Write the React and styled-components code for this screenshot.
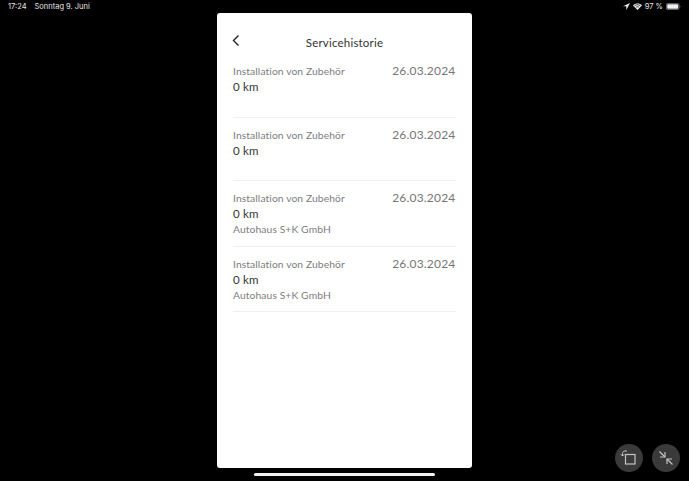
import React from "react";
import styled, { createGlobalStyle } from "styled-components";

const Global = createGlobalStyle`
  html, body { margin:0; padding:0; background:#000; }
  body { font-family:"Lato","Liberation Sans",sans-serif; }
`;

const Screen = styled.div`
  width:689px;
  height:481px;
  background:#000;
  position:relative;
  overflow:hidden;
  display:flex;
  flex-direction:column;
  align-items:center;
`;

const StatusBar = styled.div`
  width:100%;
  height:13px;
  box-sizing:border-box;
  padding:0 8px;
  display:flex;
  justify-content:space-between;
  align-items:center;
  color:#e6e6e6;
  font-size:7.5px;
  font-family:"Inter",sans-serif;
`;

const StatusGroup = styled.div`
  display:flex;
  align-items:center;
  gap:${(props) => props.gap}px;
`;

const Card = styled.div`
  width:255px;
  height:455px;
  background:#fff;
  border-radius:3px;
  box-sizing:border-box;
  padding:0 16px;
  flex-shrink:0;
`;

const Header = styled.div`
  height:45px;
  padding-top:15px;
  box-sizing:border-box;
  position:relative;
  display:flex;
  justify-content:center;
  align-items:center;
  margin-bottom:5px;
`;

const BackButton = styled.div`
  position:absolute;
  left:-1px;
  top:21px;
  width:8px;
  height:13px;
  display:flex;
`;

const Title = styled.div`
  font-size:11.5px;
  color:#333;
  letter-spacing:0.2px;
  margin-top:-1px;
`;

const Row = styled.div`
  height:${(props) => props.h}px;
  box-sizing:border-box;
  border-bottom:1px solid #f0f0f0;
  display:flex;
  justify-content:space-between;
  align-items:flex-start;
  padding-top:${(props) => props.pt}px;
  padding-right:0.5px;
`;

const Info = styled.div`
  display:flex;
  flex-direction:column;
`;

const Label = styled.div`
  font-size:10.3px;
  line-height:16px;
  color:#7d7d7d;
  letter-spacing:0.1px;
`;

const Km = styled.div`
  font-size:11.5px;
  line-height:15px;
  color:#333;
  letter-spacing:0.2px;
`;

const Dealer = styled.div`
  font-size:10.3px;
  line-height:16px;
  color:#7d7d7d;
  letter-spacing:0.1px;
`;

const DateText = styled.div`
  font-size:12px;
  line-height:16px;
  color:#767676;
  letter-spacing:0.2px;
`;

const HomeBar = styled.div`
  width:181px;
  height:3px;
  background:#f2f2f2;
  border-radius:2px;
  margin-top:5px;
  flex-shrink:0;
`;

const FloatButton = styled.div`
  position:absolute;
  left:${(props) => props.x}px;
  top:444px;
  width:28px;
  height:28px;
  border-radius:50%;
  background:#3a3a3a;
  display:flex;
  align-items:center;
  justify-content:center;
`;

const services = [
  { h: 55, pt: 0 },
  { h: 63, pt: 9 },
  { h: 66, pt: 9, dealer: "Autohaus S+K GmbH" },
  { h: 65, pt: 9, dealer: "Autohaus S+K GmbH" },
];

export default function App() {
  return (
    <>
      <Global />
      <Screen>
        <StatusBar>
          <StatusGroup gap={8}>
            <span>17:24</span>
            <span>Sonntag 9. Juni</span>
          </StatusGroup>
          <StatusGroup gap={3}>
            <svg width="7" height="7" viewBox="0 0 7 7">
              <path d="M7 0L0 3.2h3.3V7z" fill="#eee" />
            </svg>
            <svg width="9" height="7" viewBox="0 0 9 7">
              <path d="M4.5 7L0 2.4C2.5 0 6.5 0 9 2.4z" fill="#eee" />
              <path d="M1.6 2.8C3.2 1.4 5.8 1.4 7.4 2.8" stroke="#000" strokeWidth=".7" fill="none" />
              <path d="M2.9 4.3C3.8 3.6 5.2 3.6 6.1 4.3" stroke="#000" strokeWidth=".7" fill="none" />
            </svg>
            <span>97 %</span>
            <svg width="15" height="7" viewBox="0 0 15 7">
              <rect x=".4" y=".4" width="12.6" height="6.2" rx="1.5" fill="none" stroke="#999" strokeWidth=".7" />
              <rect x="1.2" y="1.2" width="11" height="4.6" rx=".8" fill="#f2f2f2" />
              <path d="M13.8 2.3c.7.2.7 2.2 0 2.4z" fill="#999" />
            </svg>
          </StatusGroup>
        </StatusBar>
        <Card>
          <Header>
            <BackButton>
              <svg width="8" height="13" viewBox="0 0 8 13">
                <path d="M6.5 1.5L1.5 6.5l5 5" fill="none" stroke="#222" strokeWidth="1.4" />
              </svg>
            </BackButton>
            <Title>Servicehistorie</Title>
          </Header>
          {services.map((s, i) => (
            <Row key={i} h={s.h} pt={s.pt}>
              <Info>
                <Label>Installation von Zubehör</Label>
                <Km>0 km</Km>
                {s.dealer && <Dealer>{s.dealer}</Dealer>}
              </Info>
              <DateText>26.03.2024</DateText>
            </Row>
          ))}
        </Card>
        <HomeBar />
        <FloatButton x={615}>
          <svg width="20" height="20" viewBox="0 0 20 20" fill="none" stroke="#c4c4c4">
            <rect x="6.5" y="6.5" width="9.5" height="9.5" strokeWidth="1.2" />
            <path d="M3.5 8V5.5C3.5 4 4.5 3 6 3h2" strokeWidth="1" />
            <path d="M1.8 6.3L3.5 8l1.7-1.7" strokeWidth="1" />
          </svg>
        </FloatButton>
        <FloatButton x={652}>
          <svg width="20" height="20" viewBox="0 0 20 20" fill="none" stroke="#c4c4c4" strokeWidth="1.2">
            <path d="M3.5 3.5L9 9" />
            <path d="M4 9h5V4" />
            <path d="M16.5 16.5L11 11" />
            <path d="M16 11h-5v5" />
          </svg>
        </FloatButton>
      </Screen>
    </>
  );
}
